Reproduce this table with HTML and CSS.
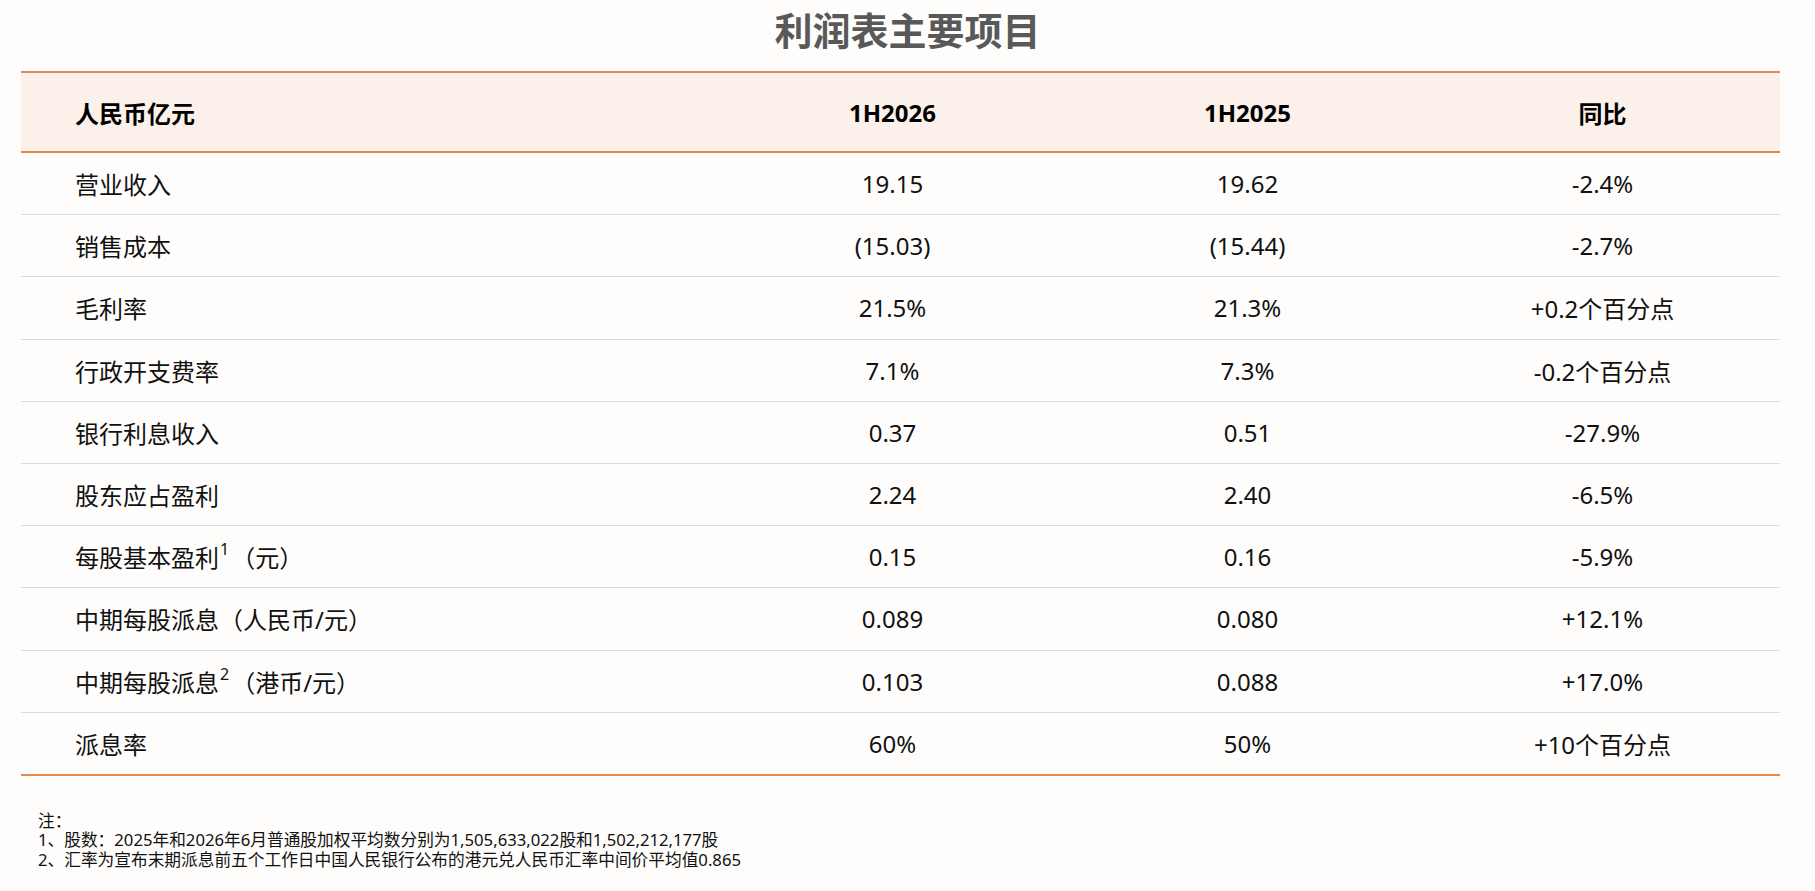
FILE: index.html
```html
<!DOCTYPE html>
<html lang="zh-CN">
<head>
<meta charset="utf-8">
<title>利润表主要项目</title>
<link rel="stylesheet" href="styles.css">
</head>
<body>
<div class="page">
  <h1 class="title">利润表主要项目</h1>
  <table class="report">
    <colgroup>
      <col class="c-label">
      <col class="c-val">
      <col class="c-val">
      <col class="c-val">
    </colgroup>
    <thead>
      <tr>
        <th class="label">人民币亿元</th>
        <th>1H2026</th>
        <th>1H2025</th>
        <th>同比</th>
      </tr>
    </thead>
    <tbody>
      <tr><td class="label">营业收入</td><td>19.15</td><td>19.62</td><td>-2.4%</td></tr>
      <tr><td class="label">销售成本</td><td>(15.03)</td><td>(15.44)</td><td>-2.7%</td></tr>
      <tr><td class="label">毛利率</td><td>21.5%</td><td>21.3%</td><td>+0.2个百分点</td></tr>
      <tr><td class="label">行政开支费率</td><td>7.1%</td><td>7.3%</td><td>-0.2个百分点</td></tr>
      <tr><td class="label">银行利息收入</td><td>0.37</td><td>0.51</td><td>-27.9%</td></tr>
      <tr><td class="label">股东应占盈利</td><td>2.24</td><td>2.40</td><td>-6.5%</td></tr>
      <tr><td class="label">每股基本盈利<sup class="sup">1</sup>（元）</td><td>0.15</td><td>0.16</td><td>-5.9%</td></tr>
      <tr><td class="label">中期每股派息（人民币/元）</td><td>0.089</td><td>0.080</td><td>+12.1%</td></tr>
      <tr><td class="label">中期每股派息<sup class="sup">2</sup>（港币/元）</td><td>0.103</td><td>0.088</td><td>+17.0%</td></tr>
      <tr><td class="label">派息率</td><td>60%</td><td>50%</td><td>+10个百分点</td></tr>
    </tbody>
  </table>
  <div class="notes">
    <p>注：</p>
    <p>1、股数：2025年和2026年6月普通股加权平均数分别为1,505,633,022股和1,502,212,177股</p>
    <p>2、汇率为宣布末期派息前五个工作日中国人民银行公布的港元兑人民币汇率中间价平均值0.865</p>
  </div>
</div>
</body>
</html>
```

FILE: styles.css
```css
html, body {
  margin: 0;
  padding: 0;
  background: #fefdfb;
}

body {
  font-family: "Noto Sans", "Noto Sans CJK SC", sans-serif;
  color: #111;
}

.page {
  width: 1815px;
}

.title {
  margin: 0 0 14px 0;
  height: 57px;
  line-height: 58px;
  text-align: center;
  font-family: "Noto Sans CJK SC", sans-serif;
  font-size: 38px;
  font-weight: 700;
  color: #595959;
}

.report {
  margin-left: 21px;
  width: 1759px;
  border-collapse: collapse;
  table-layout: fixed;
  font-size: 24px;
}

.c-label { width: 694px; }
.c-val { width: 355px; }

.report thead tr {
  background: #fcf0ea;
  border-top: 2px solid #dd8e5a;
  border-bottom: 2px solid #e4894e;
}

.report th {
  height: 78px;
  padding: 0;
  font-weight: 700;
  text-align: center;
  color: #000;
}

.report td {
  height: 61.2px;
  padding: 0;
  text-align: center;
  border-bottom: 1px solid #dddddd;
  color: #111;
}

.report tbody tr:last-child td {
  border-bottom: 2px solid #e4894e;
}

.report .label {
  text-align: left;
  padding-left: 54px;
}

.sup {
  font-size: 16px;
  line-height: 1;
  vertical-align: top;
  position: relative;
  top: 2px;
  margin-left: 1px;
  margin-right: 2px;
}

.notes {
  margin: 35px 0 0 38px;
  font-size: 16.7px;
  line-height: 19.5px;
  color: #111;
}

.notes p {
  margin: 0;
}
```
